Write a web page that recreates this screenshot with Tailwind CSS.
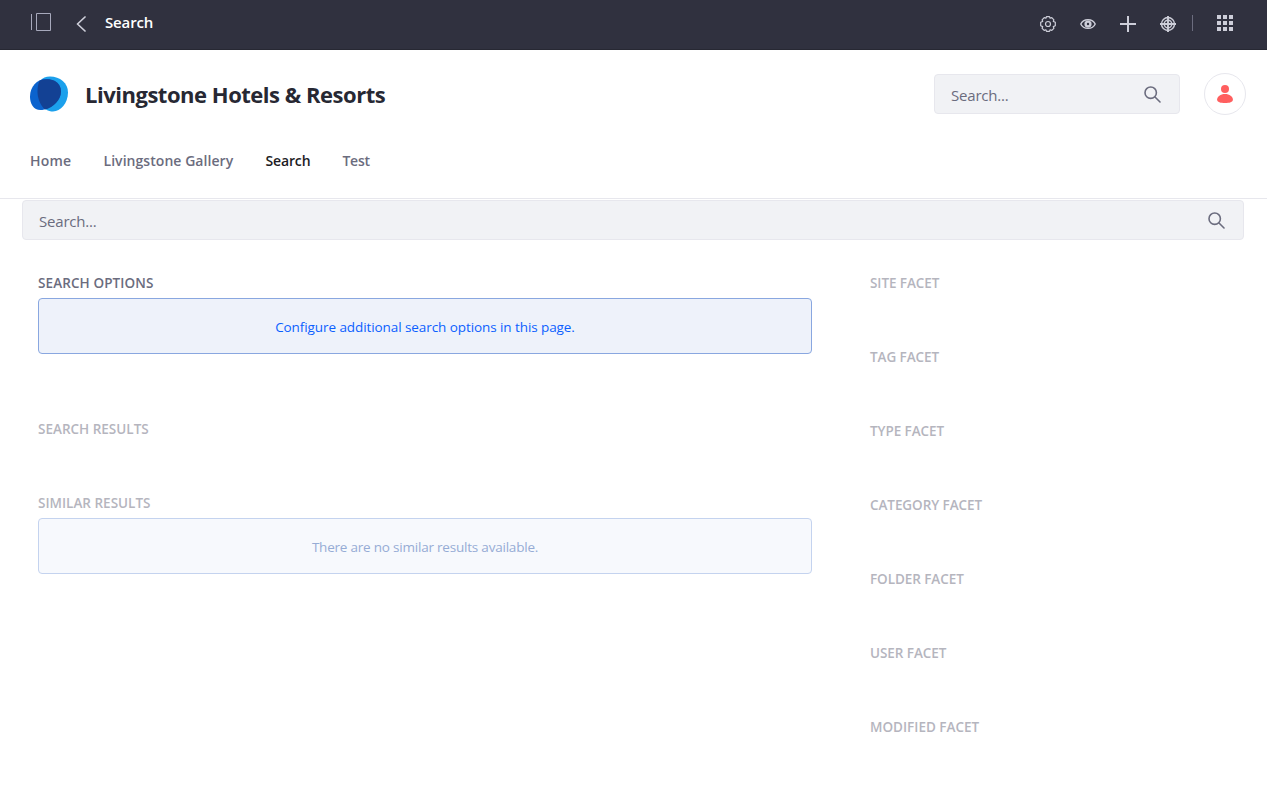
<!DOCTYPE html>
<html lang="en">
<head>
<meta charset="utf-8">
<title>Search</title>
<script src="https://cdn.jsdelivr.net/npm/@tailwindcss/browser@4"></script>
</head>
<body class="h-[790px] overflow-hidden bg-white font-['Open_Sans','Noto_Sans',sans-serif] text-[#6b6c7e]">
<header class="flex h-[50px] items-center border-b border-[#272833] bg-[#30313f] pl-[30px] pr-[34px] text-[#cdced9]">
  <svg class="mt-[-6px] h-5 w-[22px] shrink-0" viewBox="0 0 22 20" fill="none" stroke="#a7a9bc"><path d="M1.500 2v16M6.500 1.500h14v17h-14z"/></svg>
  <svg class="ml-6 mt-[-2px] h-4 w-[10px]" viewBox="0 0 10 16" fill="none" stroke="currentColor" stroke-width="1.700" stroke-linecap="round" stroke-linejoin="round"><path d="M9 1 1.500 8 9 15"/></svg>
  <h1 class="ml-[19px] mt-[-5px] text-[15px] font-semibold tracking-[-0.15px] text-white">Search</h1>
  <div class="ml-auto mt-[-2px] flex items-center gap-6">
    <svg class="h-4 w-4" viewBox="0 0 16 16" fill="none" stroke="currentColor" stroke-width="1.200" stroke-linejoin="round"><path d="M6.500.7h3l.6 1.500 1.700-.6 2.100 2.200-.6 1.600 2 .9v3.400l-2 .9.6 1.700-2.100 2.100-1.700-.6-.6 1.600h-3l-.6-1.600-1.700.6-2.100-2.100.6-1.700-2-.9V6.300l2-.9-.6-1.600 2.100-2.200 1.700.6z"/><circle cx="8" cy="8" r="2.500"/></svg>
    <svg class="h-4 w-4" viewBox="0 0 16 16" fill="none" stroke="currentColor" stroke-width="1.400"><path d="M.8 8C2 5.200 4.600 3.700 8 3.700S14 5.200 15.200 8C14 10.800 11.400 12.300 8 12.300S2 10.800.8 8z"/><circle cx="8" cy="8" r="3.600" stroke="none" fill="currentColor"/><circle cx="8" cy="8" r="1.200" stroke="none" fill="#30313f"/></svg>
    <svg class="h-4 w-4" viewBox="0 0 16 16" fill="currentColor"><path d="M7 0h2v7h7v2H9v7H7V9H0V7h7z"/></svg>
    <svg class="h-4 w-4" viewBox="0 0 16 16" fill="none" stroke="currentColor" stroke-width="1.400"><circle cx="8" cy="8" r="6.500"/><circle cx="8" cy="8" r="3.800"/><path stroke-width="1.900" d="M8 0v16M0 8h16"/></svg>
  </div>
  <div class="ml-4 mt-[-3px] h-4 w-px bg-[#6b6c7e]"></div>
  <svg class="ml-6 mt-[-3px] h-4 w-4" viewBox="0 0 16 16" fill="currentColor"><path d="M0 0h4v4H0zM6 0h4v4H6zM12 0h4v4h-4zM0 6h4v4H0zM6 6h4v4H6zM12 6h4v4h-4zM0 12h4v4H0zM6 12h4v4H6zM12 12h4v4h-4z"/></svg>
</header>
<div class="h-[149px] border-b border-[#e7e7ed]">
  <div class="flex items-center pl-[30px] pr-[21px] pt-[23px]">
    <svg class="h-[36px] w-[38px]" viewBox="0 0 38 36"><path fill="#1ba0ec" d="M20 .5C30 .5 38 7 38 16.500 38 27 30.500 35.500 23 35.500 13 35.500 7.500 25 7.500 15.500 7.500 6 11.500.5 20 .5z"/><path fill="#0b63ce" d="M15.500 3C25 3 31 8 31 15.500 31 25 20 34 10.500 34 3.500 34 0 28 0 20.500 0 11 7 3 15.500 3z"/><path fill="#134194" d="M9.700 4.500C15 2.500 21 2.700 25 5c4 2.400 6 6 6 10.500C31 23.500 23.500 31.500 15 33.500 10 29 7.500 22 7.500 15.500c0-4.500.700-8 2.200-11z"/></svg>
    <div class="ml-[17px] text-[22px] font-bold tracking-[-0.48px] text-[#272833]">Livingstone Hotels &amp; Resorts</div>
    <div class="ml-auto flex h-10 w-[246px] items-center justify-between rounded border border-[#e7e7ed] bg-[#f1f2f5] pl-4 pr-[18px] text-[15px]"><span class="pt-0.5 tracking-[-0.2px]">Search...</span>
      <svg class="h-[17px] w-[17px]" viewBox="0 0 17 17" fill="none" stroke="currentColor" stroke-width="1.600" stroke-linecap="round"><circle cx="6.700" cy="6.700" r="5.700"/><path d="m11 11 5 5"/></svg>
    </div>
    <div class="ml-6 flex h-[42px] w-[42px] items-center justify-center rounded-full border border-[#e7e7ed]">
      <svg class="h-[18px] w-4" viewBox="0 0 16 18" fill="#ff5f5f"><circle cx="8" cy="4" r="4"/><path d="M8 9c4.500 0 7.900 2.500 7.900 5.500C15.900 17.300 12.500 18 8 18S.1 17.300.1 14.500C.1 11.500 3.500 9 8 9z"/></svg>
    </div>
  </div>
  <nav class="mt-[35px] flex pl-[30px] text-[14px] leading-[21px] font-semibold">
    <a class="w-[73.500px] tracking-[0.2px]">Home</a><a class="w-[162px] tracking-[0.05px]">Livingstone Gallery</a><a class="w-[77px] tracking-[-0.150px] text-[#1c1c24]">Search</a><a class="tracking-[-0.300px]">Test</a>
  </nav>
</div>
<main class="px-[22px] pt-px">
  <div class="mr-px flex h-10 items-center justify-between rounded border border-[#e7e7ed] bg-[#f1f2f5] pl-4 pr-[18px] text-[15px]"><span class="pt-0.5 tracking-[-0.2px]">Search...</span>
    <svg class="h-[17px] w-[17px]" viewBox="0 0 17 17" fill="none" stroke="currentColor" stroke-width="1.600" stroke-linecap="round"><circle cx="6.700" cy="6.700" r="5.700"/><path d="m11 11 5 5"/></svg>
  </div>
  <div class="flex pl-4 pt-[33px] text-[13.500px] leading-[21px]">
    <div class="w-[774px]">
      <h2 class="font-semibold tracking-[0.1px]">SEARCH OPTIONS</h2>
      <div class="mt-1 flex h-14 items-center justify-center rounded border border-[#89a7e0] bg-[#eef2fa] pt-0.5 tracking-[-0.080px] text-[#0b5fff]">Configure additional search options in this page.</div>
      <h2 class="mt-[65px] font-semibold text-[#b5b5be]">SEARCH RESULTS</h2>
      <h2 class="mt-[53px] font-semibold text-[#b5b5be]">SIMILAR RESULTS</h2>
      <div class="mt-1 flex h-14 items-center justify-center rounded border border-[#c4d3ef] bg-[#f7f9fd] pt-0.5 tracking-[-0.210px] text-[#96acd5]">There are no similar results available.</div>
    </div>
    <div class="ml-[58px] flex flex-col gap-[53px] font-semibold tracking-[-0.070px] text-[#b5b5be]">
      <h2>SITE FACET</h2><h2>TAG FACET</h2><h2>TYPE FACET</h2><h2>CATEGORY FACET</h2><h2>FOLDER FACET</h2><h2>USER FACET</h2><h2 class="tracking-normal">MODIFIED FACET</h2>
    </div>
  </div>
</main>
</body>
</html>
